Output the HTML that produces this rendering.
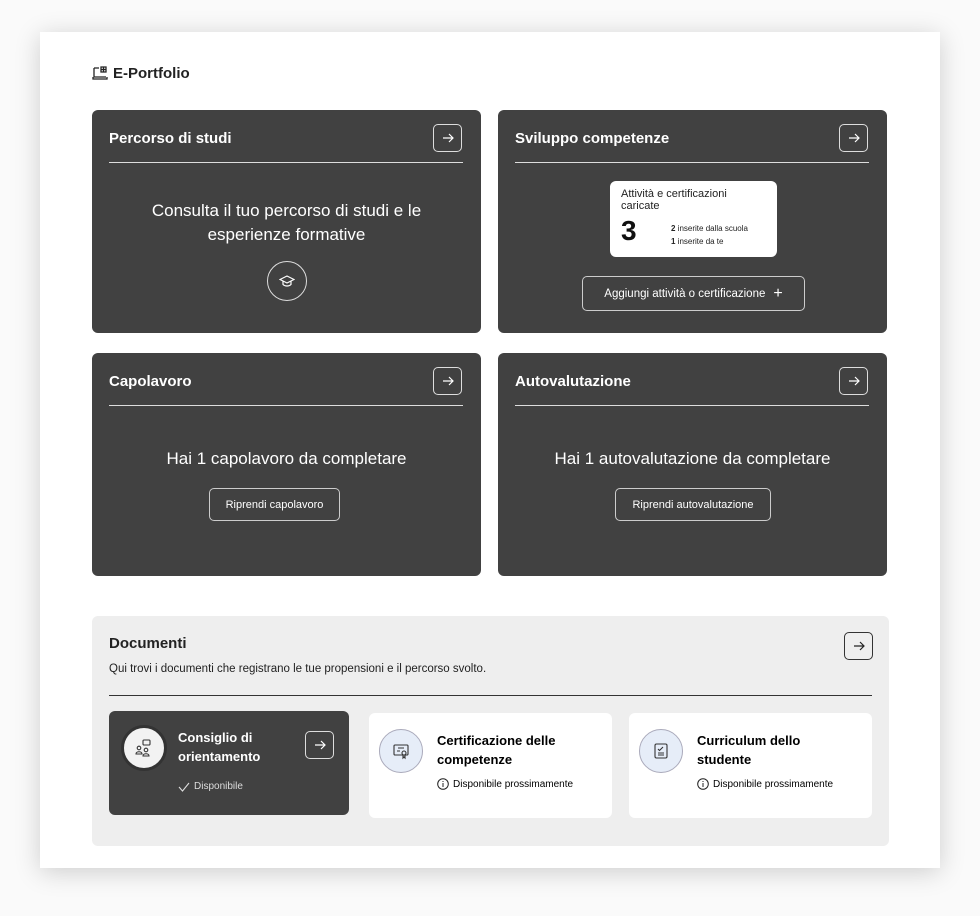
<!DOCTYPE html>
<html><head><meta charset="utf-8"><style>
*{box-sizing:border-box;margin:0;padding:0}
body{width:980px;height:916px;background:#fafafa;font-family:"Liberation Sans",sans-serif;position:relative;overflow:hidden}
.page{position:absolute;left:40px;top:32px;width:900px;height:836px;background:#fff;box-shadow:0 4px 24px rgba(0,0,0,.18)}
.h1{position:absolute;left:92px;top:65px;font-size:15px;font-weight:bold;color:#222;display:flex;align-items:center;gap:5px}
.card{position:absolute;width:389px;height:223px;background:#414141;border-radius:6px;color:#fff}
.card .t{position:absolute;left:17px;top:20px;font-size:15px;font-weight:bold}
.card .ln{position:absolute;left:17px;right:18px;top:52px;height:1px;background:#ddd}
.ab{position:absolute;width:29px;height:28px;border:1px solid #ddd;border-radius:5px;display:flex;align-items:center;justify-content:center}
.card .ab{right:19px;top:14px}
.mid{position:absolute;left:0;right:0;text-align:center;font-size:17px;line-height:24px}
.btn{position:absolute;border:1px solid #ccc;border-radius:5px;font-size:11px;display:flex;align-items:center;justify-content:center;gap:8px}
.docs{position:absolute;left:92px;top:616px;width:797px;height:230px;background:#eee;border-radius:6px}
.sc{position:absolute;border-radius:6px;height:105px;width:243px;background:#fff}
.circ{position:absolute;left:10px;top:16px;width:44px;height:44px;border-radius:50%;display:flex;align-items:center;justify-content:center}
.sc .tt{position:absolute;left:68px;top:18px;font-size:13px;font-weight:bold;line-height:19px}
.sc .st{position:absolute;left:68px;top:65px;font-size:10px;display:flex;align-items:center;gap:4px}
</style></head><body>
<div class="page"></div>
<div class="h1"><svg width="16" height="15" viewBox="0 0 16 15" fill="none" stroke="#222" stroke-width="1.3"><path d="M2 2h5M2 2v9h12M1 11v2h14v-2M9 1h5v5H9zM11.5 1v5M9 3.5h5"/></svg>E-Portfolio</div>

<div class="card" style="left:92px;top:110px"><div class="t">Percorso di studi</div><div class="ab"><svg width="12" height="10" viewBox="0 0 12 10" fill="none" stroke="#fff" stroke-width="1.2"><path d="M1 5h10M7 1l4 4-4 4"/></svg></div><div class="ln"></div>
<div class="mid" style="top:89px">Consulta il tuo percorso di studi e le<br>esperienze formative</div>
<div style="position:absolute;left:175px;top:151px;width:40px;height:40px;border:1px solid #ddd;border-radius:50%;display:flex;align-items:center;justify-content:center"><svg width="16" height="14" viewBox="0 0 16 14" fill="none" stroke="#fff" stroke-width="1.2"><path d="M8 2L1 5.5 8 9l7-3.5zM4 7v3.5c2 2 6 2 8 0V7"/></svg></div></div>

<div class="card" style="left:498px;top:110px"><div class="t">Sviluppo competenze</div><div class="ab"><svg width="12" height="10" viewBox="0 0 12 10" fill="none" stroke="#fff" stroke-width="1.2"><path d="M1 5h10M7 1l4 4-4 4"/></svg></div><div class="ln"></div>
<div style="position:absolute;left:112px;top:71px;width:167px;height:76px;background:#fff;border-radius:6px;color:#222"><div style="position:absolute;left:11px;top:7px;font-size:11px;line-height:12px">Attività e certificazioni<br>caricate</div><div style="position:absolute;left:11px;top:34px;font-size:28px;font-weight:bold;color:#111">3</div><div style="position:absolute;left:61px;top:41px;font-size:8px;line-height:13px"><b>2</b> inserite dalla scuola<br><b>1</b> inserite da te</div></div>
<div class="btn" style="left:84px;top:166px;width:223px;height:35px;font-size:11.5px">Aggiungi attività o certificazione <span style="font-size:16px">+</span></div></div>

<div class="card" style="left:92px;top:353px"><div class="t">Capolavoro</div><div class="ab"><svg width="12" height="10" viewBox="0 0 12 10" fill="none" stroke="#fff" stroke-width="1.2"><path d="M1 5h10M7 1l4 4-4 4"/></svg></div><div class="ln"></div>
<div class="mid" style="top:94px">Hai 1 capolavoro da completare</div>
<div class="btn" style="left:117px;top:135px;width:131px;height:33px">Riprendi capolavoro</div></div>

<div class="card" style="left:498px;top:353px"><div class="t">Autovalutazione</div><div class="ab"><svg width="12" height="10" viewBox="0 0 12 10" fill="none" stroke="#fff" stroke-width="1.2"><path d="M1 5h10M7 1l4 4-4 4"/></svg></div><div class="ln"></div>
<div class="mid" style="top:94px">Hai 1 autovalutazione da completare</div>
<div class="btn" style="left:117px;top:135px;width:156px;height:33px">Riprendi autovalutazione</div></div>

<div class="docs">
<div style="position:absolute;left:17px;top:19px;font-size:15px;font-weight:bold;color:#222">Documenti</div>
<div style="position:absolute;left:17px;top:47px;font-size:11.5px;color:#222">Qui trovi i documenti che registrano le tue propensioni e il percorso svolto.</div>
<div class="ab" style="left:752px;top:16px;border-color:#333"><svg width="12" height="10" viewBox="0 0 12 10" fill="none" stroke="#222" stroke-width="1.2"><path d="M1 5h10M7 1l4 4-4 4"/></svg></div>
<div style="position:absolute;left:17px;right:17px;top:79px;height:1px;background:#333"></div>

<div class="sc" style="left:17px;top:95px;width:240px;height:104px;background:#414141;color:#fff">
<div class="circ" style="background:#f2f2f2;border:3px solid #333;left:12px;top:14px;width:46px;height:46px"><svg width="20" height="20" viewBox="0 0 20 20" fill="none" stroke="#333" stroke-width="1.1"><rect x="9" y="2" width="7" height="5" rx="1"/><circle cx="5" cy="10" r="1.8"/><circle cx="12" cy="12" r="1.8"/><path d="M2 16c0-3 6-3 6 0zM9 18c0-3 6-3 6 0z"/></svg></div>
<div class="tt" style="left:69px;top:17px">Consiglio di<br>orientamento</div>
<div class="ab" style="left:196px;top:20px"><svg width="12" height="10" viewBox="0 0 12 10" fill="none" stroke="#fff" stroke-width="1.2"><path d="M1 5h10M7 1l4 4-4 4"/></svg></div>
<div class="st" style="left:69px;top:70px;color:#ddd"><svg width="12" height="10" viewBox="0 0 12 10" fill="none" stroke="#ddd" stroke-width="1.1"><path d="M1 5l3.5 4L11 1"/></svg>Disponibile</div></div>

<div class="sc" style="left:277px;top:97px"><div class="circ" style="background:#e6edf8;border:1px solid #aab"><svg width="18" height="18" viewBox="0 0 18 18" fill="none" stroke="#333" stroke-width="1.1"><rect x="2" y="3" width="14" height="10" rx="1"/><path d="M6 6h6M5 9h3"/><circle cx="12" cy="11" r="2"/><path d="M11 13v3l1-1 1 1v-3"/></svg></div><div class="tt">Certificazione delle<br>competenze</div><div class="st"><svg width="12" height="12" viewBox="0 0 12 12" fill="none" stroke="#222"><circle cx="6" cy="6" r="5.3"/><path d="M6 5v4M6 3v1"/></svg>Disponibile prossimamente</div></div>

<div class="sc" style="left:537px;top:97px"><div class="circ" style="background:#e6edf8;border:1px solid #aab"><svg width="18" height="18" viewBox="0 0 18 18" fill="none" stroke="#333" stroke-width="1.1"><rect x="3" y="2" width="12" height="14" rx="1.5"/><path d="M6 7l1.5 1.5L11 5M6 11h6M6 13h6"/></svg></div><div class="tt">Curriculum dello<br>studente</div><div class="st"><svg width="12" height="12" viewBox="0 0 12 12" fill="none" stroke="#222"><circle cx="6" cy="6" r="5.3"/><path d="M6 5v4M6 3v1"/></svg>Disponibile prossimamente</div></div>
</div>
</body></html>
